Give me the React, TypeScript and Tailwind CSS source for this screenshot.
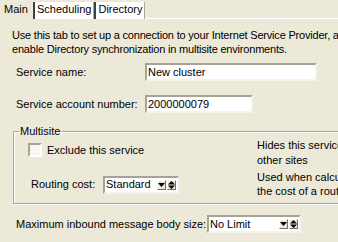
import React from 'react';

const sunken =
  'border-2 border-t-[#A7A496] border-l-[#A7A496] border-b-[#F4F3EE] border-r-[#F4F3EE] bg-white';

function ArrowButton() {
  return (
    <div className="w-[9px] h-[10px] bg-[#ECE9D8] border border-t-white border-l-white border-b-[#716F64] border-r-[#716F64] flex items-center justify-center">
      <svg width="7" height="4" viewBox="0 0 7 4">
        <path d="M0 0h7L3.5 4z" fill="#000" />
      </svg>
    </div>
  );
}

function Spinner() {
  return (
    <div className="w-[9px] h-[10px] bg-[#ECE9D8] border border-t-white border-l-white border-b-[#716F64] border-r-[#716F64] flex items-center justify-center">
      <svg width="7" height="8" viewBox="0 0 7 8">
        <path d="M3.5 0L7 3.5H0z" fill="#000" />
        <path d="M0 4.5h7L3.5 8z" fill="#000" />
      </svg>
    </div>
  );
}

function Select({ value, width }: { value: string; width: string }) {
  return (
    <div className={`${sunken} ${width} h-[18px] flex items-center pl-[1px] pr-[1px]`}>
      <span className="flex-1 leading-none">{value}</span>
      <div className="flex gap-[1px]">
        <ArrowButton />
        <Spinner />
      </div>
    </div>
  );
}

export default function App() {
  return (
    <div
      className="w-[338px] h-[242px] bg-[#ECE9D8] overflow-hidden text-[11px] text-black"
      style={{ fontFamily: '"Liberation Sans", Arial, sans-serif' }}
    >
      {/* tabs */}
      <div className="flex h-[19px] items-end">
        <div className="h-[19px] w-[33px] pl-[4px] pt-[2px] leading-[14px]">Main</div>
        <div className="h-[17px] bg-white border-l-2 border-l-[#404040] border-r border-r-[#ACA899] px-[2px] leading-[15px]">
          Scheduling
        </div>
        <div className="h-[17px] bg-white border-l-2 border-l-[#404040] border-r border-r-[#ACA899] px-[2px] leading-[15px]">
          Directory
        </div>
        <div className="flex-1 h-[1px] bg-white" />
      </div>

      <div className="pl-[12px] pt-[9px] leading-[14px] whitespace-nowrap tracking-[-0.2px]">
        <p>Use this tab to set up a connection to your Internet Service Provider, and</p>
        <p>enable Directory synchronization in multisite environments.</p>
      </div>

      <div className="flex items-center mt-[7px] pl-[16px]">
        <span className="w-[129px]">Service name:</span>
        <div className={`${sunken} w-[172px] h-[18px] pl-[1px] leading-[14px]`}>New cluster</div>
      </div>
      <div className="flex items-center mt-[14px] pl-[16px]">
        <span className="w-[129px]">Service account number:</span>
        <div className={`${sunken} w-[108px] h-[18px] pl-[1px] leading-[14px]`}>2000000079</div>
      </div>

      <fieldset className="ml-[13px] mt-[12px] w-[340px] h-[79px] border border-[#ACA899] shadow-[inset_1px_1px_0_#fff,1px_1px_0_#fff]">
        <legend className="ml-[5px] px-[1px] leading-[12px]">Multisite</legend>
        <div className="grid grid-cols-[243px_1fr] grid-rows-[33px_auto] whitespace-nowrap">
          <div className="flex items-start pl-[14px] pt-[6px]">
            <div className="w-[14px] h-[14px] border-2 border-t-[#A7A496] border-l-[#A7A496] border-b-white border-r-white bg-[#F7F6F1]" />
            <span className="ml-[5px] leading-[14px]">Exclude this service</span>
          </div>
          <div className="leading-[15px] text-[11px] pt-[1px]">
            <p>Hides this service from</p>
            <p>other sites</p>
          </div>
          <div className="flex items-center pl-[17px] pt-[1px]">
            <span className="w-[72px]">Routing cost:</span>
            <Select value="Standard" width="w-[76px]" />
          </div>
          <div className="leading-[14px] text-[11px]">
            <p>Used when calculating</p>
            <p>the cost of a route</p>
          </div>
        </div>
      </fieldset>

      <div className="flex items-center mt-[11px] pl-[16px]">
        <span className="w-[191px]">Maximum inbound message body size:</span>
        <Select value="No Limit" width="w-[94px]" />
      </div>
    </div>
  );
}
